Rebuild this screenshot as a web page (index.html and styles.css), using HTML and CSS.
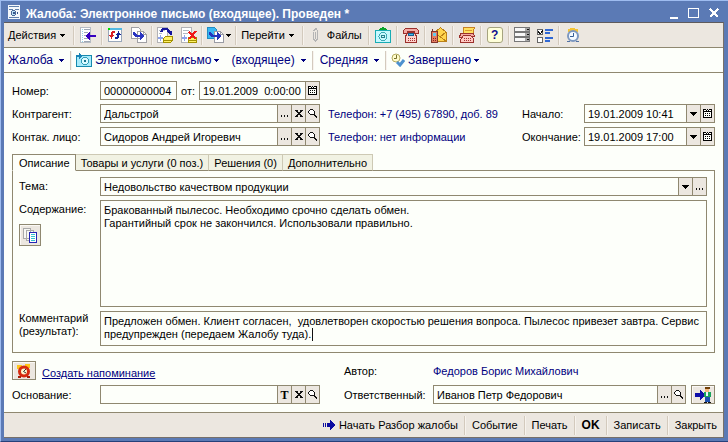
FILE: index.html
```html
<!DOCTYPE html>
<html lang="ru">
<head>
<meta charset="utf-8">
<title>Жалоба: Электронное письмо (входящее)</title>
<link rel="stylesheet" href="styles.css">
</head>
<body>
<svg class="defs" aria-hidden="true">
  <symbol id="calendar" viewBox="0 0 9 9"><path fill="#fdfffa" d="M0 1h9v8H0z"/><path fill="#000" d="M0 0h3v1H0zM4 0h1v1H4zM6 0h3v1H6zM0 1h1v8H0zM8 1h1v8H8zM1 8h7v1H1zM1 2h7v1H1zM3 1h1v1H3zM5 1h1v1H5zM2 4h1v1H2zM4 4h1v1H4zM6 4h1v1H6zM2 6h1v1H2zM4 6h1v1H4zM6 6h1v1H6z"/></symbol>
  <symbol id="cross" viewBox="0 0 8 7"><path fill="#111" d="M0 0h3v1H0zM5 0h3v1H5zM1 1h2v1H1zM5 1h2v1H5zM2 2h4v1H2zM3 3h2v1H3zM2 4h4v1H2zM1 5h2v1H1zM5 5h2v1H5zM0 6h3v1H0zM5 6h3v1H5z"/></symbol>
  <symbol id="lens" viewBox="0 0 9 9"><path fill="#fff" d="M1 1h5v4H1z"/><path fill="#111" d="M2 0h3v1H2zM1 1h1v1H1zM5 1h1v1H5zM0 2h1v2H0zM6 2h1v3H6zM1 4h1v1H1zM2 5h5v1H2zM6 6h2v1H6zM7 7h2v1H7zM8 8h1v1H8z"/></symbol>
  <symbol id="down" viewBox="0 0 7 4"><path fill="currentColor" d="M0 0h7L3.500 4z"/></symbol>
  <symbol id="dots" viewBox="0 0 8 2"><path fill="#111" d="M0 0h1v2H0zM3 0h1v2H3zM6 0h1v2H6z"/></symbol>
</svg>
<div class="window">
  <header class="title">
    <svg width="12" height="14" viewBox="0 0 12 14"><path fill="#f4f7fb" d="M0 0h12v14H0z"/><path stroke="#6080ac" d="M1 1.500h10M1 4.500h4M7 4.500h4M1 12.500h10"/><circle cx="5.500" cy="8" r="2.500" fill="#bde3f5" stroke="#4d6997"/><path fill="#36558d" d="M5 7h2v2H5zM9 7h1v2H9z"/></svg>
    <h1>Жалоба: Электронное письмо (входящее). Проведен *</h1>
    <div class="controls">
      <button aria-label="Свернуть"><svg width="12" height="12"><path stroke="#fff" stroke-width="2" d="M2 11h8"/></svg></button>
      <button aria-label="Развернуть"><svg width="12" height="12"><path fill="none" stroke="#fff" d="M.5 1.500h10v9H.5zM0 1h11"/></svg></button>
      <button aria-label="Закрыть окно"><svg width="12" height="12"><path stroke="#fff" stroke-width="2" d="M2 2l8 8M10 2l-8 8"/></svg></button>
    </div>
  </header>

  <div class="body">
  <nav class="toolbar" aria-label="Панель команд">
    <button class="word">Действия<svg class="tri"><use href="#down"/></svg></button>
    <i class="sep"></i>
    <button class="tool" aria-label="Список"><svg width="16" height="16" viewBox="0 0 16 16"><path fill="#fff" stroke="#b6bcc4" d="M.5.5h10v15H.5z"/><path stroke="#8fd5ee" stroke-dasharray="1 1" d="M2.500 2v13"/><path stroke="#9da7b6" d="M4 2.500h6M4 5.500h4M4 8.500h2M4 11.500h4M4 14.500h6"/><path fill="#3500c0" d="M5 9l5-5v4h6v2h-6v4z"/></svg></button>
    <i class="sep"></i>
    <button class="tool slim" aria-label="Обновить"><svg width="14" height="14" viewBox="0 0 14 14"><path fill="#fff" stroke="#9aa8bb" d="M.5.500h13v13H.5z"/><path fill="#54b9e2" d="M0 0h14v2H0z"/><path fill="#00e000" d="M0 0h2v2H0z"/><path fill="#d91c24" d="M4 3h3v2H5v2h1v1H5v1H4v2H3V9H2V8H1V7h2V4h1z"/><path fill="#142398" d="M10 11H7V9h2V7H8V6h1V5h1V3h1v2h1v1h1v1h-2v3h-1z"/></svg></button>
    <button class="tool slim" aria-label="Скопировать"><svg width="16" height="16" viewBox="0 0 16 16"><path fill="#fff" stroke="#a0a0a4" d="M.5.500h7l2 2v9h-9zM6.500 4.500h6l3 3v8h-9z"/><path fill="none" stroke="#a0a0a4" d="M12.500 4.500v3h3"/><path fill="#2934c0" d="M2 5h2l2 3h3V5l5 4-5 4v-3H5L2 8z"/></svg></button>
    <i class="sep"></i>
    <button class="tool slim" aria-label="Провести"><svg width="16" height="16" viewBox="0 0 16 16"><path fill="#fff" stroke="#b2b2b5" d="M.5.500h10v15H.5z"/><path stroke="#b1bac4" d="M2 3.500h6M2 6.500h3"/><path fill="#8ca3ed" d="M3 8h1v2h2v2H4v2H3v-2H1v-2h2z"/><path fill="#fff266" stroke="#a49100" d="M6.500 11.500l2-2h7v4l-2 2h-7z"/><path stroke="#a49100" d="M7 13.500h8"/><path fill="none" stroke="#15159c" stroke-width="2" d="M4 5l2-3h4l3 3"/><path fill="#15159c" d="M9 4h6v4h-2z"/></svg></button>
    <button class="tool slim" aria-label="Отмена проведения"><svg width="16" height="16" viewBox="0 0 16 16"><path fill="#fff" stroke="#b2b2b5" d="M.5.500h10v15H.5z"/><path stroke="#b1bac4" d="M2 3.500h6M2 6.500h5"/><path fill="#8ca3ed" d="M3 8h1v2h2v2H4v2H3v-2H1v-2h2z"/><path fill="#fff266" stroke="#a49100" d="M7.500 10.500h8v5h-8z"/><path stroke="#a49100" d="M8 13.500h7"/><path stroke="#f01919" stroke-width="2" d="M8 5l7 7M15 4l-7 8"/></svg></button>
    <i class="sep"></i>
    <button class="tool combo" aria-label="Ввести на основании"><svg width="17" height="16" viewBox="0 0 17 16"><path fill="#38b8f4" stroke="#238dc2" d="M.5.500h7l2 2v9h-9z"/><path fill="#fff" stroke="#999ba4" d="M7.500 4.500h6l3 3v8h-9z"/><path fill="none" stroke="#999ba4" d="M13.500 4.500v3h3"/><path fill="#2434bc" d="M2 5h2l2 3h4V5l5 4-5 4v-3H5L2 8z"/></svg><svg class="tri"><use href="#down"/></svg></button>
    <i class="sep"></i>
    <button class="word">Перейти<svg class="tri"><use href="#down"/></svg></button>
    <i class="sep"></i>
    <button class="word files"><svg width="7" height="14" viewBox="0 0 7 14"><path fill="none" stroke="#b4b4b4" d="M1.500 4v7l2 2 2-2V3L4 .5 1.500 3M3.500 4v7"/></svg>Файлы</button>
    <i class="sep"></i>
    <button class="tool" aria-label="Электронное письмо"><svg width="16" height="16" viewBox="0 0 16 16"><path fill="#09a32b" d="M8 0l7 4H1z"/><path fill="#c6f8ff" stroke="#18acb4" d="M.5 3.500h15v12H.5z"/><circle cx="8" cy="9.500" r="4" fill="none" stroke="#3eabb6"/><circle cx="8" cy="9.500" r="1.500" fill="none" stroke="#26818d"/></svg></button>
    <i class="sep"></i>
    <button class="tool" aria-label="Телефон"><svg width="16" height="16" viewBox="0 0 16 16"><path fill="#f4aaa4" stroke="#9b302c" d="M2.500 1.500h11l2 2v3h-4v-2h-7v2h-4v-3z"/><path fill="#ffd2cc" stroke="#9b302c" d="M4.500 5.500h7l2 4v6h-11v-6z"/><path fill="#43bbed" stroke="#195e90" d="M5.500 6.500h5v2h-5z"/><path stroke="#a43434" stroke-dasharray="1 1" d="M5 11.500h7M5 13.500h7"/></svg></button>
    <i class="sep"></i>
    <button class="tool" aria-label="Сообщение"><svg width="16" height="16" viewBox="0 0 16 16"><path fill="#ffd54e" stroke="#bb8117" d="M3.500 5.500l6-5 6 5v9h-12z"/><path fill="none" stroke="#bb8117" d="M3 5l6 5 6-5M8 9l7 5"/><path fill="#e57d61" stroke="#80362c" d="M.5 4.500h6v11h-6zM1.500 2v2"/><path fill="#66caed" d="M2 6h3v3H2z"/><path stroke="#802523" stroke-dasharray="1 1" d="M2 11.500h4M2 13.500h4"/></svg></button>
    <i class="sep"></i>
    <button class="tool" aria-label="Факс"><svg width="16" height="16" viewBox="0 0 16 16"><path fill="#ffe060" stroke="#c88122" d="M4.500.500h11l-2 7h-9z"/><path stroke="#dc9b31" d="M6 3.500h7"/><path fill="#f4aaa4" stroke="#9b302c" d="M1.500 6.500h13l1 3h-3l-1-1h-7l-1 2h-3z"/><path fill="#ffc9c2" stroke="#9b302c" d="M4.500 8.500h7l3 3v4h-13v-3z"/><path stroke="#a43434" stroke-dasharray="1 1" d="M5 11.500h7M5 13.500h7"/></svg></button>
    <i class="sep"></i>
    <button class="tool" aria-label="Справка"><span class="help">?</span></button>
    <i class="sep"></i>
    <button class="tool slim" aria-label="Поля"><svg width="16" height="16" viewBox="0 0 16 16"><path fill="#f8f8f8" stroke="#777" d="M.5.500h15v4H.5zM.5 5.500h15v4H.5zM.5 10.500h15v4H.5z"/><path fill="#a8a8a8" d="M11 1h4v3h-4zM11 6h4v3h-4zM11 11h4v3h-4z"/><path fill="#111" d="M12 2h3l-1 2zM12 7h3l-1 2zM12 12h3l-1 2z"/></svg></button>
    <button class="tool slim" aria-label="Настройка"><svg width="17" height="15" viewBox="0 0 17 15"><path fill="#fff" stroke="#666" d="M.5 1.500h5v5h-5zM.5 9.500h5v5h-5z"/><path fill="#111" d="M1 3h1v1h1v1h1V3h1V2h1v2H5v1H4v1H2V5H1z"/><path fill="#2f68d4" d="M8 1h8v2H8zM8 4h5v2H8zM8 9h8v2H8zM8 12h5v2H8z"/></svg></button>
    <i class="sep"></i>
    <button class="tool" aria-label="Напоминание"><svg class="smooth" width="14" height="16" viewBox="0 0 14 16"><path fill="#f4c436" d="M4 1h5v1h3v3H2V2h2z"/><circle cx="7" cy="9" r="5" fill="#f6fbff" stroke="#7d98c0" stroke-width="2"/><path fill="none" stroke="#355f99" d="M7.500 6v3.500H4"/><path fill="#5272a4" d="M1 14h3v1H1zM10 14h3v1h-3z"/></svg></button>
  </nav>

  <nav class="statebar" aria-label="Состояние">
    <button class="word">Жалоба<svg class="tri"><use href="#down"/></svg></button>
    <i class="sep"></i>
    <button class="word mail"><svg width="16" height="14" viewBox="0 0 16 14"><path fill="#a9ebfb" stroke="#168aae" d="M.5 2.500h15v11H.5z"/><circle cx="9" cy="8" r="3.500" fill="#dcfaff" stroke="#329eb7"/><circle cx="9" cy="8" r="1" fill="none" stroke="#18758f"/><path fill="#1a83b5" d="M0 2h3V0l3 3-3 3V4H0z"/></svg>Электронное письмо<svg class="tri"><use href="#down"/></svg></button>
    <button class="word">(входящее)<svg class="tri"><use href="#down"/></svg></button>
    <i class="sep"></i>
    <button class="word">Средняя<svg class="tri"><use href="#down"/></svg></button>
    <i class="sep"></i>
    <button class="word mail"><svg class="smooth" width="14" height="14" viewBox="0 0 14 14"><circle cx="5" cy="5" r="4" fill="#fffccc" stroke="#b4ac61"/><path fill="none" stroke="#77712c" d="M5.500 2v3.500H3"/><path fill="none" stroke="#4c91cf" stroke-width="3" d="M6 9l3 3 4-5"/></svg>Завершено<svg class="tri"><use href="#down"/></svg></button>
  </nav>

  <main class="form">
    <section class="head">
      <label for="num">Номер:</label>
      <div class="numline">
        <span class="field number"><input id="num" value="00000000004"></span>
        <label for="date">от:</label>
        <span class="field date"><input id="date" value="19.01.2009  0:00:00"><button aria-label="Календарь"><svg width="9" height="9"><use href="#calendar"/></svg></button></span>
      </div>

      <label class="start" for="agent">Контрагент:</label>
      <span class="field"><input id="agent" value="Дальстрой"><button aria-label="Выбрать"><svg class="dots"><use href="#dots"/></svg></button><button aria-label="Очистить"><svg width="8" height="7"><use href="#cross"/></svg></button><button aria-label="Открыть"><svg width="9" height="9"><use href="#lens"/></svg></button></span>
      <span class="info">Телефон: +7 (495) 67890, доб. 89</span>
      <label for="begin">Начало:</label>
      <span class="field"><input id="begin" value="19.01.2009 10:41"><button aria-label="Список дат"><svg width="7" height="4"><use href="#down"/></svg></button><button aria-label="Календарь"><svg width="9" height="9"><use href="#calendar"/></svg></button></span>

      <label for="person">Контак. лицо:</label>
      <span class="field"><input id="person" value="Сидоров Андрей Игоревич"><button aria-label="Выбрать"><svg class="dots"><use href="#dots"/></svg></button><button aria-label="Очистить"><svg width="8" height="7"><use href="#cross"/></svg></button><button aria-label="Открыть"><svg width="9" height="9"><use href="#lens"/></svg></button></span>
      <span class="info">Телефон: нет информации</span>
      <label for="end">Окончание:</label>
      <span class="field"><input id="end" value="19.01.2009 17:00"><button aria-label="Список дат"><svg width="7" height="4"><use href="#down"/></svg></button><button aria-label="Календарь"><svg width="9" height="9"><use href="#calendar"/></svg></button></span>
    </section>

    <div class="tabs" role="tablist">
      <button role="tab" aria-selected="true">Описание</button>
      <button role="tab" aria-selected="false">Товары и услуги (0 поз.)</button>
      <button role="tab" aria-selected="false">Решения (0)</button>
      <button role="tab" aria-selected="false">Дополнительно</button>
    </div>
    <section class="panel" role="tabpanel">
      <label for="theme">Тема:</label>
      <span class="field"><input id="theme" value="Недовольство качеством продукции"><button aria-label="Список тем"><svg width="7" height="4"><use href="#down"/></svg></button><button aria-label="Выбрать"><svg class="dots"><use href="#dots"/></svg></button></span>
      <div class="side">
        <label for="content">Содержание:</label>
        <button class="push square" aria-label="Шаблоны"><svg width="14" height="15" viewBox="0 0 14 15"><path fill="#f7f7f3" stroke="#aaa" d="M.5.500h7v10h-7zM3.500 2.500h7v10h-7z"/><path fill="#fff" stroke="#2424b4" d="M6.500 4.500h7v10h-7z"/><path stroke="#35c2cf" d="M8 6.500h4M8 8.500h4M8 10.500h4M8 12.500h4"/></svg></button>
      </div>
      <textarea id="content" class="big">Бракованный пылесос. Необходимо срочно сделать обмен.
Гарантийный срок не закончился. Использовали правильно.</textarea>
      <label for="comment">Комментарий (результат):</label>
      <div class="commentbox">
        <textarea id="comment">Предложен обмен. Клиент согласен,  удовлетворен скоростью решения вопроса. Пылесос привезет завтра. Сервис предупрежден (передаем Жалобу туда).</textarea>
        <i class="caret"></i>
      </div>
    </section>

    <section class="foot">
      <div class="remind">
        <button class="push" aria-label="Напоминание"><svg class="smooth" width="14" height="14" viewBox="0 0 14 14"><path fill="#ffc51b" d="M0 1h5v4H0zM8 0h5v4H8z"/><circle cx="7" cy="7.500" r="4.500" fill="#fff5cc" stroke="#d62a0f" stroke-width="3"/><path fill="none" stroke="#333" d="M9 5L6.500 7.500 9 9"/><path fill="#a91c08" d="M1 12h3v2H1zM10 12h3v2h-3z"/></svg></button>
        <a href="#reminder">Создать напоминание</a>
      </div>
      <span>Автор:</span>
      <span class="info author">Федоров Борис Михайлович</span>
      <label for="basis">Основание:</label>
      <span class="field"><input id="basis" value=""><button class="t" aria-label="Тип">T</button><button aria-label="Очистить"><svg width="8" height="7"><use href="#cross"/></svg></button><button aria-label="Открыть"><svg width="9" height="9"><use href="#lens"/></svg></button></span>
      <label for="owner">Ответственный:</label>
      <div class="owner">
        <span class="field"><input id="owner" value="Иванов Петр Федорович"><button aria-label="Выбрать"><svg class="dots"><use href="#dots"/></svg></button><button aria-label="Открыть"><svg width="9" height="9"><use href="#lens"/></svg></button></span>
        <button class="push" aria-label="Передать"><svg width="17" height="16" viewBox="0 0 17 16"><path fill="#0d0da8" d="M0 6h5V3l5 5-5 5v-3H0z"/><path fill="#704008" d="M10 0h5v2h-5z"/><path fill="#f1b77e" d="M10 2h4v3h-4z"/><path fill="#17a35b" d="M9 5h7v5H9z"/><path fill="#e8f4ff" d="M11 5h2v4h-2z"/><path fill="#1c4fae" d="M10 10h5v5h-5z"/><path fill="#111" d="M9 15h3v1H9zM13 15h3v1h-3z"/></svg></button>
      </div>
    </section>
  </main>

  <footer class="actions">
    <button><svg width="12" height="10" viewBox="0 0 12 10"><path fill="#0a0aa0" d="M0 3h1v4H0zM2 3h1v4H2zM4 3h3V0l5 5-5 5V7H4z"/></svg>Начать Разбор жалобы</button>
    <i class="sep"></i>
    <button>Событие</button>
    <i class="sep"></i>
    <button>Печать</button>
    <i class="sep"></i>
    <button class="ok">OK</button>
    <i class="sep"></i>
    <button>Записать</button>
    <i class="sep"></i>
    <button>Закрыть</button>
  </footer>
  </div>
</div>
</body>
</html>
```
FILE: styles.css
```css
* { box-sizing: border-box; }
body {
  margin: 0;
  font: 11px/14px "Liberation Sans", Arial, sans-serif;
  color: #000;
  background: #5b7ab5;
}
button, input, textarea { font: inherit; color: inherit; margin: 0; }
button { display: flex; align-items: center; border: 0; padding: 0; background: none; white-space: nowrap; }
svg { flex: none; display: block; shape-rendering: crispEdges; }
.smooth { shape-rendering: auto; }
.defs { position: absolute; width: 0; height: 0; }
.window {
  display: flex;
  flex-direction: column;
  min-height: 100vh;
  padding: 0 4px 3px 3px;
  background: #5b7ab5;
  border-top: 1px solid #9ebcf0;
  border-left: 1px solid #9ebcf0;
  border-bottom: 1px solid #26407a;
}
.title { display: flex; align-items: center; gap: 6px; height: 21px; padding: 0 4px; color: #fff; }
.title h1 { flex: 1; margin: 0; padding-top: 4px; font-size: 12px; line-height: 14px; }
.controls { display: flex; gap: 8px; padding-top: 3px; }
.body { flex: 1; display: flex; flex-direction: column; background: #fdfffa; border-top: 1px solid #5e5a5c; border-right: 1px solid #77706a; border-bottom: 1px solid #77706a; }
.toolbar, .statebar { display: flex; align-items: center; height: 25px; border-bottom: 1px solid #8f8870; }
.toolbar { background: #ece7e0; }
.statebar { font-size: 12px; color: #000080; }
.sep { flex: none; width: 2px; height: 19px; border-left: 1px solid #d3cabd; border-right: 1px solid #f7f3ee; }
.word { padding: 0 8px 0 4px; gap: 4px; }
.statebar .word { padding: 0 6px; gap: 6px; }
.statebar .word:first-child { padding-left: 4px; }
.tri { width: 5px; height: 3px; }
.tool { flex: none; width: 26px; height: 22px; justify-content: center; }
.slim { width: 24px; }
.combo { width: 32px; gap: 2px; }
.toolbar .files { gap: 8px; padding: 0 6px 0 8px; }
.statebar .mail { gap: 3px; padding-left: 4px; }
.help {
  width: 16px; height: 16px; border: 1px solid #a6a47e; border-radius: 3px;
  background: #ffffd9; color: #101090; font-weight: bold; font-size: 12px; line-height: 14px;
}

.form { flex: 1; padding: 8px; display: flex; flex-direction: column; }
.head { display: grid; grid-template-columns: 88px 220px 1fr 62px 131px; row-gap: 4px; align-items: center; }
.head .start { grid-column: 1; }
.numline { grid-column: 2 / -1; display: flex; align-items: center; gap: 4px; }
.number { width: 77px; }
.date { flex: none; width: 121px; }
.info { color: #000080; }
.head .info { padding-left: 8px; }
.field { display: flex; height: 19px; border: 1px solid #8f8870; background: #fdfffa; min-width: 0; }
.field input { flex: 1; min-width: 0; width: 0; border: 0; padding: 0 3px; background: none; outline: 0; white-space: pre; }
.field button { flex: none; width: 14px; justify-content: center; border-left: 1px solid #8f8870; background: #ece7e0; }
.dots { width: 8px; height: 2px; margin-top: 5px; }
.field .t { font: bold 12px/14px "Liberation Serif", serif; }

.tabs { display: flex; align-items: flex-end; margin: 8px 0 -1px; position: relative; }
.tabs button { height: 17px; padding: 0 5px; background: #f1f2e3; border: 1px solid #cdc9b4; border-left: 0; border-bottom: 1px solid #8f8870; }
.tabs button[aria-selected="true"] { padding: 0 5px 0 6px; background: #fdfffa; border: 1px solid #8f8870; border-bottom-color: #fdfffa; }
.panel {
  flex: 1;
  display: grid; grid-template-columns: 81px 1fr; grid-template-rows: 19px 1fr 35px; row-gap: 4px;
  padding: 6px 7px 6px 6px; border: 1px solid #8f8870;
}
.panel > label { padding-top: 2px; }
.side { display: flex; flex-direction: column; align-items: flex-start; gap: 8px; padding-top: 2px; }
textarea { display: block; width: 100%; height: 100%; resize: none; overflow: hidden; padding: 3px; border: 1px solid #8f8870; background: #fdfffa; outline: 0; line-height: 13px; border-radius: 0; }
.panel > label[for="comment"] { padding: 1px 8px 0 0; line-height: 13px; }
.commentbox { position: relative; }
.caret { position: absolute; left: 212px; top: 17px; width: 1px; height: 13px; background: #111; }
.push { justify-content: center; width: 24px; height: 19px; border: 1px solid #8f8870; background: #ece7e0; box-shadow: inset 1px 1px #fbf9f5; }
.square { width: 22px; height: 22px; }

.foot { display: grid; grid-template-columns: 88px 220px 24px 89px 1fr; row-gap: 5px; align-items: center; margin-top: 8px; }
.remind { grid-column: 1 / 4; display: flex; align-items: center; gap: 6px; }
.remind a { color: #000080; padding-top: 4px; }
.foot label[for="owner"] { grid-column: 4; }
.owner { display: flex; gap: 5px; }
.owner .field { flex: 1; }

.actions { display: flex; align-items: center; justify-content: flex-end; height: 25px; background: #ece7e0; border-top: 1px solid #8f8870; }
.actions button { padding: 0 6px; gap: 4px; }
.actions .ok { font-size: 12px; font-weight: bold; }
```
